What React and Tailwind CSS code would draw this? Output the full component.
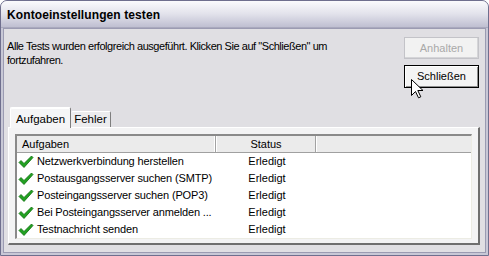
import React from "react";

function Check() {
  return (
    <svg width="16" height="14" viewBox="0 0 16 14" className="shrink-0">
      <path d="M1 7.5 L3 5.5 L6 8.5 L13.5 1 L15 2.5 L6 12.5 Z" fill="#21a121" stroke="#0d6d0d" strokeWidth="0.8" strokeLinejoin="round" />
    </svg>
  );
}

function Cursor() {
  return (
    <svg width="13" height="20" viewBox="0 0 13 20" className="absolute left-[411px] top-[79px]">
      <path d="M0.5 0.5 L0.5 16.5 L4.5 12.5 L7.5 18.8 L9.8 17.8 L6.8 11.5 L12 11.5 Z" fill="#ffffff" stroke="#000000" strokeWidth="1" strokeLinejoin="miter" />
    </svg>
  );
}

const rows = [
  "Netzwerkverbindung herstellen",
  "Postausgangsserver suchen (SMTP)",
  "Posteingangsserver suchen (POP3)",
  "Bei Posteingangsserver anmelden ...",
  "Testnachricht senden",
];

export default function App() {
  return (
    <div className="relative w-[489px] h-[256px] overflow-hidden bg-white font-['Liberation_Sans',Arial,sans-serif] text-[11px] text-black">
      <div className="w-full h-full flex flex-col rounded-t-[7px] border border-[#6f6f8e] bg-[#c8c8d6]">
        <div className="h-[27px] shrink-0 flex items-center pl-[6px] rounded-t-[6px] bg-gradient-to-b from-[#fbfbfd] via-[#e2e2eb] to-[#bfbfd1] border-b border-[#a9a9bd]">
          <span className="font-bold text-[12px] tracking-[0.1px] mt-[1px]">Kontoeinstellungen testen</span>
        </div>
        <div className="flex-1 flex flex-col mx-[2px] mb-[2px] bg-[#e0dfe3] border border-[#9b9bb2] pt-[8px] pl-[3px] pr-[4px]">
          <div className="flex items-start">
            <div className="w-[368px] mt-[2px] leading-[14px] tracking-[-0.45px]">
              Alle Tests wurden erfolgreich ausgeführt. Klicken Sie auf "Schließen" um fortzufahren.
            </div>
            <div className="ml-auto flex flex-col gap-[6px] mr-[2px]">
              <div className="w-[75px] h-[22px] flex items-center justify-center border border-[#c3c3c8] bg-[#f2f2f2] text-[#a9a9a9] shadow-[inset_-1px_-1px_0_#d5d5d8]">
                Anhalten
              </div>
              <div className="w-[75px] h-[23px] flex items-center justify-center border border-black bg-[#f4f4f4] shadow-[inset_1px_1px_0_#ffffff,inset_-1px_-1px_0_#8e8e8e]">
                Schließen
              </div>
            </div>
          </div>
          <div className="mt-[18px] flex items-end pl-[3px] h-[21px] relative z-10">
            <div className="w-[61px] h-[21px] flex items-start justify-center pt-[3px] bg-[#f5f5f6] border-t border-l border-white border-r border-r-[#7e7e7e] rounded-t-[2px] shadow-[inset_0_1px_0_#ffffff] mb-[-1px]">
              <span className="text-[11.5px]">Aufgaben</span>
            </div>
            <div className="w-[40px] h-[16px] flex items-center justify-center bg-[#ececee] border-t border-white border-r border-r-[#7e7e7e] rounded-t-[2px]">
              <span className="text-[11.5px] mt-[1px]">Fehler</span>
            </div>
          </div>
          <div className="ml-[1px] mr-[1px] h-[118px] flex flex-col bg-[#f3f3f4] border-l border-t border-white border-r-2 border-b-2 border-r-[#6f6f6f] border-b-[#6f6f6f] p-[6px]">
            <div className="flex-1 flex flex-col bg-white border-t-2 border-l-2 border-t-[#8a8a8a] border-l-[#8a8a8a] border-b border-r border-b-[#ecece4] border-r-[#ecece4]">
              <div className="h-[17px] flex bg-[#ebebeb] border-b border-[#a0a0a0] leading-[16px]">
                <div className="w-[199px] pl-[5px] border-r border-[#a2a2a2] shadow-[inset_-1px_0_0_#fff]">Aufgaben</div>
                <div className="w-[100px] text-center border-r border-[#a2a2a2] border-l border-l-white">Status</div>
                <div className="flex-1 border-l border-white"></div>
              </div>
              {rows.map((r) => (
                <div key={r} className="h-[17px] flex items-center">
                  <div className="w-[200px] flex items-center pl-[1px] gap-[3px]">
                    <Check />
                    <span className="tracking-[-0.15px] whitespace-nowrap">{r}</span>
                  </div>
                  <div className="w-[100px] text-center">Erledigt</div>
                </div>
              ))}
            </div>
          </div>
        </div>
      </div>
      <Cursor />
    </div>
  );
}
